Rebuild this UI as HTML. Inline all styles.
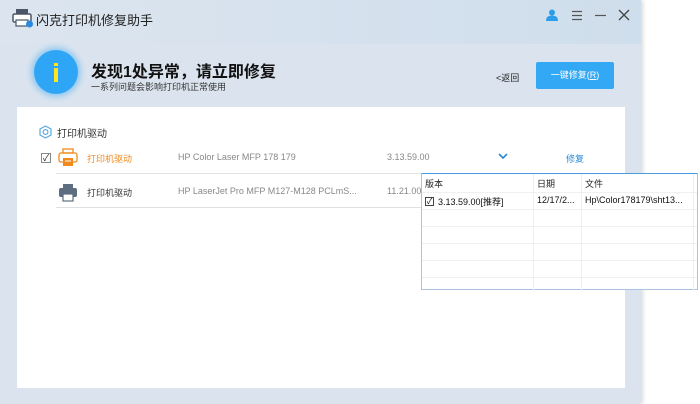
<!DOCTYPE html>
<html><head><meta charset="utf-8"><style>
*{margin:0;padding:0;box-sizing:border-box}
body{width:700px;height:404px;background:#fff;position:relative;overflow:hidden;font-family:"Liberation Sans","Noto Sans CJK SC",sans-serif}
.win{position:absolute;left:0;top:0;width:641px;height:404px;background:#dbe4ee;box-shadow:2px 0 4px rgba(0,0,0,.15)}
.title{position:absolute;left:0;top:0;width:641px;height:44px;background:linear-gradient(90deg,#dce5ef,#cfdeec)}
.t{position:absolute;font-size:12px;white-space:nowrap}
.panel{position:absolute;left:17px;top:107px;width:608px;height:281px;background:#fff}
.pop{position:absolute;left:421px;top:173px;width:277px;height:117px;background:#fff;border:1px solid #aac4e0;border-top:1px solid #4a9be0}
.pop .row{position:absolute;left:0;width:275px;height:1px;background:#eef0f3}
.pop .col{position:absolute;top:0;width:1px;height:116px;background:#eceef1}
</style></head><body>
<div class="win">
<div class="title"></div>
<svg style="position:absolute;left:12px;top:8px" width="22" height="20" viewBox="0 0 22 20"><rect x="4" y="1" width="12" height="5" fill="#4a5668"/><rect x="1" y="6" width="18" height="8" rx="1.5" fill="#fff" stroke="#4a5668" stroke-width="1.5"/><rect x="4" y="12" width="12" height="6" fill="#fff" stroke="#4a5668" stroke-width="1.2"/><circle cx="17.5" cy="16" r="3.5" fill="#2a8ae0"/></svg>
<div class="t" style="left:36px;top:10px;font-size:13px;color:#222">闪克打印机修复助手</div>
<svg style="position:absolute;left:546px;top:9px" width="12" height="12" viewBox="0 0 12 12"><circle cx="6" cy="3.5" r="3" fill="#2c9de8"/><path d="M0 12 Q0 6.5 6 6.5 Q12 6.5 12 12Z" fill="#2c9de8"/></svg>
<svg style="position:absolute;left:571px;top:10px" width="12" height="11"><path d="M1 1.5H11M1 5.5H11M1 9.5H11" stroke="#555" stroke-width="1.2"/></svg>
<svg style="position:absolute;left:594px;top:10px" width="13" height="11"><path d="M1 5.5H12" stroke="#555" stroke-width="1.2"/></svg>
<svg style="position:absolute;left:618px;top:9px" width="12" height="12"><path d="M1 1L11 11M11 1L1 11" stroke="#444" stroke-width="1.3"/></svg>
<div style="position:absolute;left:34px;top:50px;width:44px;height:44px;border-radius:50%;background:#2fa6f5;box-shadow:0 0 6px 3px rgba(60,170,245,.45)"></div>
<div style="position:absolute;left:54px;top:63px;width:4px;height:3px;background:#ffe620"></div>
<div style="position:absolute;left:54px;top:68px;width:4px;height:14px;background:#ffe620"></div>
<div class="t" style="left:91px;top:58px;font-size:16px;font-weight:bold;color:#111">发现1处异常，请立即修复</div>
<div class="t" style="left:91px;top:80px;font-size:9px;color:#333">一系列问题会影响打印机正常使用</div>
<div class="t" style="left:496px;top:71px;font-size:9px;color:#222">&lt;返回</div>
<div style="position:absolute;left:536px;top:62px;width:78px;height:27px;background:#33a8f4;border-radius:2px;color:#fff;font-size:9px;text-align:center;line-height:27px">一键修复(<u>R</u>)</div>
<div class="panel"></div>
<svg style="position:absolute;left:39px;top:125px" width="13" height="14" viewBox="0 0 13 14"><path d="M6.5 1L12 4V10L6.5 13L1 10V4Z" fill="none" stroke="#5aa9e0" stroke-width="1.2"/><circle cx="6.5" cy="7" r="2.4" fill="none" stroke="#5aa9e0" stroke-width="1.2"/></svg>
<div class="t" style="left:57px;top:125px;font-size:10px;color:#333">打印机驱动</div>
<div style="position:absolute;left:41px;top:153px;width:10px;height:10px;border:1px solid #888;font-size:9px;line-height:8px;text-align:center;color:#222">✓</div>
<svg style="position:absolute;left:58px;top:148px" width="20" height="20" viewBox="0 0 20 20"><rect x="5" y="1" width="10" height="4" fill="none" stroke="#f08a1c" stroke-width="1.3"/><rect x="1" y="5" width="18" height="9" rx="2" fill="none" stroke="#f08a1c" stroke-width="1.3"/><rect x="5" y="10" width="10" height="8" fill="#f08a1c"/><path d="M7 13H13" stroke="#fff"/></svg>
<div class="t" style="left:87px;top:152px;font-size:9px;color:#f08a1c">打印机驱动</div>
<div class="t" style="left:178px;top:152px;font-size:9px;color:#888">HP Color Laser MFP 178 179</div>
<div class="t" style="left:387px;top:152px;font-size:9px;color:#888">3.13.59.00</div>
<svg style="position:absolute;left:498px;top:153px" width="10" height="7"><path d="M1 1L5 5L9 1" fill="none" stroke="#2a8ad8" stroke-width="1.6"/></svg>
<div class="t" style="left:566px;top:152px;font-size:9px;color:#2a8ad8">修复</div>
<div style="position:absolute;left:56px;top:173px;width:569px;height:1px;background:#e3e3e3"></div>
<svg style="position:absolute;left:58px;top:183px" width="20" height="20" viewBox="0 0 20 20"><rect x="5" y="1" width="10" height="4" fill="#5f6d80"/><rect x="1" y="5" width="18" height="9" rx="2" fill="#5f6d80"/><rect x="5" y="11" width="10" height="7" fill="#fff" stroke="#5f6d80" stroke-width="1.2"/></svg>
<div class="t" style="left:87px;top:186px;font-size:9px;color:#333">打印机驱动</div>
<div class="t" style="left:178px;top:186px;font-size:9px;color:#888">HP LaserJet Pro MFP M127-M128 PCLmS...</div>
<div class="t" style="left:387px;top:186px;font-size:9px;color:#888">11.21.00</div>
<div style="position:absolute;left:56px;top:207px;width:569px;height:1px;background:#e0e0e0"></div>
</div>
<div class="pop">
<div class="col" style="left:111px"></div><div class="col" style="left:159px"></div><div class="col" style="left:271px"></div>
<div class="row" style="top:18px"></div><div class="row" style="top:35px"></div><div class="row" style="top:52px"></div><div class="row" style="top:69px"></div><div class="row" style="top:86px"></div><div class="row" style="top:103px"></div>
<div class="t" style="left:3px;top:3px;font-size:9px;color:#222">版本</div>
<div class="t" style="left:115px;top:3px;font-size:9px;color:#222">日期</div>
<div class="t" style="left:163px;top:3px;font-size:9px;color:#222">文件</div>
<div style="position:absolute;left:3px;top:23px;width:9px;height:9px;border:1px solid #444;font-size:8px;line-height:7px;text-align:center">✓</div>
<div class="t" style="left:16px;top:21px;font-size:9px;color:#111">3.13.59.00[推荐]</div>
<div class="t" style="left:115px;top:21px;font-size:9px;color:#111">12/17/2...</div>
<div class="t" style="left:163px;top:21px;font-size:9px;color:#111">Hp\Color178179\sht13...</div>
</div>
</body></html>
